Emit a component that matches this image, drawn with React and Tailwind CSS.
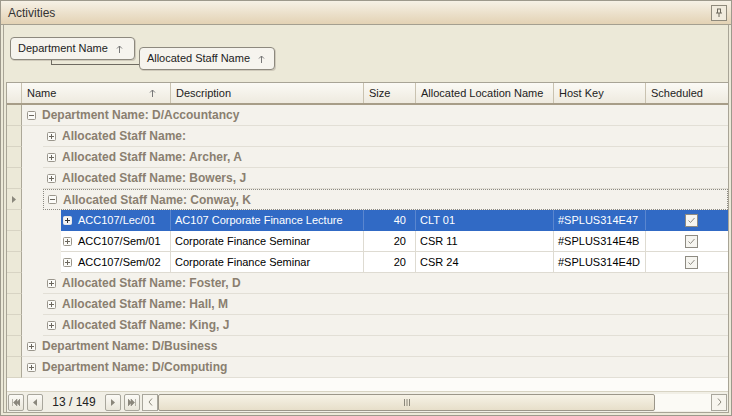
import React from 'react';

// --- small glyphs ---
const Expander = ({ open, light }) => (
  <svg width="9" height="9" viewBox="0 0 9 9" className="shrink-0">
    <rect x="0.5" y="0.5" width="8" height="8" rx="1" fill={light ? '#f4f4f4' : '#fbfbf8'} stroke={light ? '#e8e8e8' : '#9a968c'} />
    <path d="M2 4.5h5" stroke={light ? '#333' : '#6b675e'} strokeWidth="1" />
    {!open && <path d="M4.5 2v5" stroke={light ? '#333' : '#6b675e'} strokeWidth="1" />}
  </svg>
);

const Check = () => (
  <svg width="13" height="13" viewBox="0 0 13 13">
    <rect x="0.5" y="0.5" width="12" height="12" fill="#f6f5f0" stroke="#8e8b82" />
    <path d="M3.5 6.5l2 2 4-4.5" fill="none" stroke="#8f8c84" strokeWidth="1" />
  </svg>
);

const UpArrow = ({ className = 'ml-[8px]' }) => (
  <svg width="7" height="8" viewBox="0 0 7 8" className={className}>
    <path d="M3.5 1v7M1 3.5l2.5-2.5 2.5 2.5" fill="none" stroke="#777" strokeWidth="1" />
  </svg>
);

const NavBtn = ({ children, className = '' }) => (
  <div className={`w-[16px] h-[17px] border border-[#a8a69c] rounded-[2px] bg-gradient-to-b from-[#fbfaf6] to-[#e9e6da] flex items-center justify-center ${className}`}>
    {children}
  </div>
);

const cols = 'grid grid-cols-[15px_149px_193px_52px_138px_92px_82px]';

const Indicator = ({ arrow }) => (
  <div className="w-[15px] shrink-0 h-full bg-[#ece9d8] border-r border-[#aca899] border-b border-b-[#d8d4c4] flex items-center justify-center">
    {arrow && (
      <svg width="4" height="7" viewBox="0 0 4 7"><path d="M0 0l4 3.5L0 7z" fill="#8a877c" /></svg>
    )}
  </div>
);

function GroupRow({ level, text, open, focused, arrow }) {
  return (
    <div className="flex h-[21px]">
      <Indicator arrow={arrow} />
      {level === 1 && <div className="w-[21px] shrink-0 bg-[#f4f2ec]" />}
      <div className={`flex-1 flex items-center bg-[#f4f2ec] ${focused ? 'border border-dotted border-[#8c8a82]' : 'border-b border-[#e2dfd6]'} ${level === 1 ? 'pl-[4px]' : 'pl-[5px]'}`}>
        <Expander open={open} />
        <span className="ml-[6px] font-bold text-[12px] text-[#8a7f70]">{text}</span>
      </div>
    </div>
  );
}

function DataRow({ name, desc, size, loc, key2, selected }) {
  const cell = `h-full flex items-center border-r ${selected ? 'border-[#5a86cf]' : 'border-[#dedbd2]'}`;
  return (
    <div className="flex h-[21px]">
      <Indicator />
      <div className="w-[39px] shrink-0 bg-[#f4f2ec]" />
      <div className={`flex-1 flex border-b ${selected ? 'bg-[#316ac5] text-white border-[#316ac5]' : 'bg-white text-black border-[#dedbd2]'}`}>
        <div className={`${cell} w-[110px] pl-[2px]`}>
          <Expander light={selected} />
          <span className="ml-[6px]">{name}</span>
        </div>
        <div className={`${cell} w-[193px] pl-[4px]`}>{desc}</div>
        <div className={`${cell} w-[52px] justify-end pr-[9px]`}>{size}</div>
        <div className={`${cell} w-[138px] pl-[4px]`}>{loc}</div>
        <div className={`${cell} w-[92px] pl-[4px]`}>{key2}</div>
        <div className="h-full flex items-center w-[82px] pl-[39px]">
          <Check />
        </div>
      </div>
    </div>
  );
}

export default function App() {
  const staffAfter = ['Foster, D', 'Hall, M', 'King, J'];
  return (
    <div className="w-[732px] h-[416px] border border-[#9d998c] bg-[#ece9d8] flex flex-col font-['Liberation_Sans',sans-serif] text-[11px] text-[#222] overflow-hidden">
      {/* title bar */}
      <div className="h-[24px] shrink-0 flex items-center justify-between pl-[7px] pr-[4px] bg-gradient-to-b from-[#f6f1e6] to-[#e3d2b4] border-b border-[#a49f90]">
        <span className="text-[12px] text-[#333]">Activities</span>
        <div className="w-[16px] h-[16px] border border-[#8f8a7c] bg-[#f1ebdd] flex items-center justify-center">
          <svg width="8" height="10" viewBox="0 0 8 10"><path d="M2 1h4M2.5 1v4M5.5 1v4M1 5h6M4 5v4" fill="none" stroke="#6d685c" strokeWidth="1" /></svg>
        </div>
      </div>

      {/* inner panel */}
      <div className="flex-1 flex flex-col mx-[2px] mb-[2px] border border-t-0 border-[#a8a496]">
        {/* group-by panel */}
        <div className="h-[57px] shrink-0 relative pl-[6px] pt-[12px] flex items-start">
          <div className="h-[23px] pl-[7px] pr-[11px] flex items-center border border-[#8d897e] rounded-[4px] bg-[#f6f4ee] shadow-[1px_1px_0_#cfcabb]">
            Department Name<UpArrow />
          </div>
          <div className="absolute left-[47px] top-[35px] w-[88px] h-[5px] border-l border-b border-[#6f6b62]" />
          <div className="ml-[4px] mt-[10px] h-[23px] pl-[7px] pr-[9px] flex items-center border border-[#8d897e] rounded-[4px] bg-[#f6f4ee] shadow-[1px_1px_0_#cfcabb] relative">
            Allocated Staff Name<UpArrow />
          </div>
        </div>

        {/* grid */}
        <div className="flex-1 flex flex-col ml-[2px] border-l border-t border-[#a8a496] bg-[#fdfcf9]">
          <div className={`${cols} h-[22px] shrink-0 bg-gradient-to-b from-[#fbfaf5] to-[#eeeadf] border-b-2 border-[#a79d88]`}>
            <div className="border-r border-[#c9c2b0]" />
            <div className="flex items-center justify-between pl-[5px] pr-[14px] border-r border-[#c9c2b0]">Name<UpArrow className="" /></div>
            <div className="flex items-center pl-[5px] border-r border-[#c9c2b0]">Description</div>
            <div className="flex items-center pl-[5px] border-r border-[#c9c2b0]">Size</div>
            <div className="flex items-center pl-[5px] border-r border-[#c9c2b0]">Allocated Location Name</div>
            <div className="flex items-center pl-[5px] border-r border-[#c9c2b0]">Host Key</div>
            <div className="flex items-center pl-[5px]">Scheduled</div>
          </div>

          <GroupRow level={0} text="Department Name: D/Accountancy" open />
          <GroupRow level={1} text="Allocated Staff Name:" />
          <GroupRow level={1} text="Allocated Staff Name: Archer, A" />
          <GroupRow level={1} text="Allocated Staff Name: Bowers, J" />
          <GroupRow level={1} text="Allocated Staff Name: Conway, K" open focused arrow />
          <DataRow name="ACC107/Lec/01" desc="AC107 Corporate Finance Lecture" size="40" loc="CLT 01" key2="#SPLUS314E47" selected />
          <DataRow name="ACC107/Sem/01" desc="Corporate Finance Seminar" size="20" loc="CSR 11" key2="#SPLUS314E4B" />
          <DataRow name="ACC107/Sem/02" desc="Corporate Finance Seminar" size="20" loc="CSR 24" key2="#SPLUS314E4D" />
          {staffAfter.map((s) => (
            <GroupRow key={s} level={1} text={`Allocated Staff Name: ${s}`} />
          ))}
          <GroupRow level={0} text="Department Name: D/Business" />
          <GroupRow level={0} text="Department Name: D/Computing" />
          <div className="flex-1" />

          {/* navigator + scrollbar */}
          <div className="h-[21px] shrink-0 flex items-center gap-[3px] pl-[1px] pr-[1px] bg-[#f1efe6] border-t border-[#d8d4c4]">
            <NavBtn>
              <svg width="8" height="7" viewBox="0 0 8 7"><path d="M0.5 0v7M5 0L1.5 3.5 5 7zM8 0L4.5 3.5 8 7z" fill="#8a877c" stroke="#8a877c" strokeWidth="0.6" /></svg>
            </NavBtn>
            <NavBtn>
              <svg width="4" height="7" viewBox="0 0 4 7"><path d="M4 0L0 3.5 4 7z" fill="#8a877c" /></svg>
            </NavBtn>
            <span className="w-[56px] text-center text-[12px] text-[#222]">13 / 149</span>
            <NavBtn>
              <svg width="4" height="7" viewBox="0 0 4 7"><path d="M0 0l4 3.5L0 7z" fill="#8a877c" /></svg>
            </NavBtn>
            <NavBtn>
              <svg width="8" height="7" viewBox="0 0 8 7"><path d="M7.5 0v7M3 0l3.5 3.5L3 7zM0 0l3.5 3.5L0 7z" fill="#8a877c" stroke="#8a877c" strokeWidth="0.6" /></svg>
            </NavBtn>
            <div className="flex-1 flex items-center h-[17px] ml-[-1px]">
              <div className="w-[16px] h-[17px] border border-[#a8a69c] bg-[#f7f5ee] flex items-center justify-center">
                <svg width="5" height="8" viewBox="0 0 5 8"><path d="M4 0.5L1 4l3 3.5" fill="none" stroke="#8a877c" /></svg>
              </div>
              <div className="flex-1 h-[17px] flex bg-[#fbfaf5]">
                <div className="w-[497px] h-full border border-[#9b968a] rounded-[2px] bg-gradient-to-b from-[#f6f2e6] to-[#e7dfca] flex items-center justify-center">
                  <svg width="6" height="7" viewBox="0 0 6 7"><path d="M0.5 0v7M3 0v7M5.5 0v7" stroke="#8b877a" /></svg>
                </div>
              </div>
              <div className="w-[16px] h-[17px] border border-[#a8a69c] bg-[#f7f5ee] flex items-center justify-center">
                <svg width="5" height="8" viewBox="0 0 5 8"><path d="M1 0.5L4 4 1 7.5" fill="none" stroke="#8a877c" /></svg>
              </div>
            </div>
          </div>
        </div>
      </div>
    </div>
  );
}
